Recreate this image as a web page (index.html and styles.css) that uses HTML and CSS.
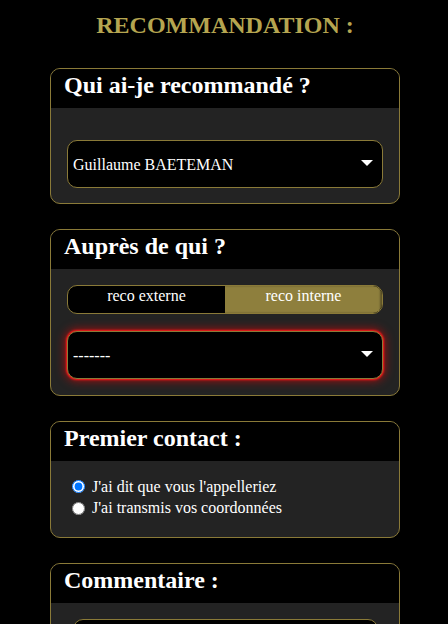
FILE: index.html
```html
<!DOCTYPE html>
<html lang="fr">
<head>
<meta charset="utf-8">
<title>Recommandation</title>
<link rel="stylesheet" href="styles.css">
</head>
<body>
<main class="page">
  <h1 class="page-title">RECOMMANDATION :</h1>

  <section class="card">
    <h2 class="card-head">Qui ai-je recommandé ?</h2>
    <div class="card-body card-body--first">
      <div class="select-wrap">
        <select class="select"><option>Guillaume BAETEMAN</option></select>
        <svg class="select-arrow" width="12" height="6" viewBox="0 0 12 6"><polygon points="0,0 12,0 6,6" fill="#fff"/></svg>
      </div>
    </div>
  </section>

  <section class="card">
    <h2 class="card-head">Auprès de qui ?</h2>
    <div class="card-body">
      <div class="toggle">
        <div class="toggle-opt">reco externe</div>
        <div class="toggle-opt toggle-opt--active">reco interne</div>
      </div>
      <div class="select-wrap select-wrap--error">
        <select class="select select--error"><option>-------</option></select>
        <svg class="select-arrow" width="12" height="6" viewBox="0 0 12 6"><polygon points="0,0 12,0 6,6" fill="#fff"/></svg>
      </div>
    </div>
  </section>

  <section class="card">
    <h2 class="card-head">Premier contact :</h2>
    <div class="card-body card-body--radios">
      <label class="radio-row"><input type="radio" name="contact" checked> J'ai dit que vous l'appelleriez</label>
      <label class="radio-row"><input type="radio" name="contact"> J'ai transmis vos coordonnées</label>
    </div>
  </section>

  <section class="card">
    <h2 class="card-head">Commentaire :</h2>
    <div class="card-body">
      <textarea class="comment"></textarea>
    </div>
  </section>
</main>
</body>
</html>
```
FILE: styles.css
```css
html, body {
  margin: 0;
  padding: 0;
  background: #000;
}
body {
  font-family: "Liberation Serif", "Times New Roman", serif;
  color: #fff;
  height: 624px;
  overflow: hidden;
}
.page {
  width: 350px;
  margin-left: 50px;
  padding-top: 11px;
}
.page-title {
  margin: 0 0 29px 0;
  font-size: 24px;
  line-height: 28px;
  font-weight: bold;
  text-align: center;
  color: #b5a550;
}
.card {
  border: 1px solid #8a7a38;
  border-radius: 10px;
  overflow: hidden;
  margin-bottom: 25px;
  background: #232323;
}
.card-head {
  margin: 0;
  background: #000;
  height: 39px;
  box-sizing: border-box;
  padding: 2px 13px 0;
  font-size: 24px;
  line-height: 28px;
  font-weight: bold;
  color: #fff;
}
.card-body {
  padding: 16px 16px 16px;
}
.card-body--first {
  padding-top: 32px;
  padding-bottom: 15px;
}
.select-wrap {
  position: relative;
}
.select {
  display: block;
  width: 100%;
  height: 48px;
  box-sizing: border-box;
  margin: 0;
  padding: 0 30px 0 5px;
  border: 1px solid #8a7a38;
  border-radius: 10px;
  background: #000;
  color: #fff;
  font-family: "Liberation Serif", "Times New Roman", serif;
  font-size: 16px;
  appearance: none;
  -webkit-appearance: none;
  outline: none;
}
.select--error {
  box-shadow: 0 0 2px 1px #ff1a1a, 0 0 10px 2px rgba(255, 0, 0, 0.55);
}
.select-wrap--error {
  margin-top: 17px;
}
.select-arrow {
  position: absolute;
  right: 10px;
  top: 20px;
  pointer-events: none;
}
.toggle {
  display: flex;
  height: 29px;
  box-sizing: border-box;
  border: 1px solid #8a7a38;
  border-radius: 10px;
  overflow: hidden;
  background: #000;
}
.toggle-opt {
  flex: 1;
  text-align: center;
  font-size: 16px;
  line-height: 18px;
  padding-top: 1px;
  color: #fff;
}
.toggle-opt--active {
  background: #8e7f3d;
  box-shadow: inset -2px 0 2px rgba(0, 0, 0, 0.35);
}
.card-body--radios {
  padding: 15px 16px 18px;
}
.radio-row {
  display: flex;
  align-items: center;
  height: 21.5px;
  font-size: 16px;
  color: #fff;
  white-space: pre;
}
.radio-row input {
  margin: 0 3px 0 5px;
  width: 13px;
  height: 13px;
}
.comment {
  display: block;
  width: calc(100% - 11px);
  height: 120px;
  box-sizing: border-box;
  margin: 0 5px 0 6px;
  border: 1px solid #8a7a38;
  border-radius: 10px;
  background: #000;
  color: #fff;
  resize: none;
}
```
